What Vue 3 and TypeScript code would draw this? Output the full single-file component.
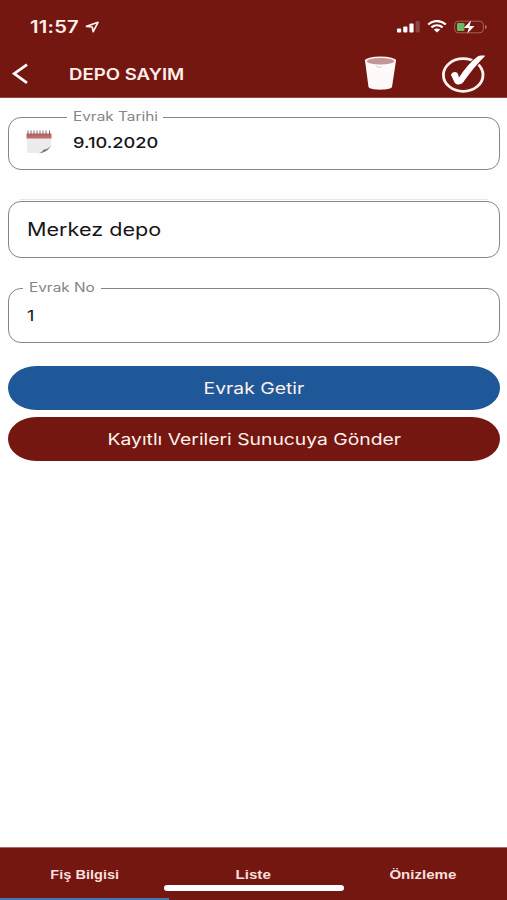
<script setup lang="ts">
import { ref } from 'vue'

interface Tab {
  id: string
  label: string
}

const tabs: Tab[] = [
  { id: 'info', label: 'Fiş Bilgisi' },
  { id: 'list', label: 'Liste' },
  { id: 'preview', label: 'Önizleme' },
]
const activeTab = ref('info')
const documentDate = ref('9.10.2020')
const warehouse = ref('Merkez depo')
const documentNo = ref('1')
</script>

<template>
  <div class="screen">
    <header class="header">
      <div class="status">
        <span class="wide time">11:57</span>
        <svg class="location" width="15" height="12" viewBox="0 0 15 12">
          <path d="M1.5 5.4 13 1.3 8.2 10.7 7.2 6Z" fill="none" stroke="currentColor" stroke-width="1.7" stroke-linejoin="round" />
        </svg>
        <svg class="signal" width="24" height="12" viewBox="0 0 24 12">
          <rect x="0" y="7.5" width="4.2" height="4" rx="1" fill="#fff" />
          <rect x="6.2" y="5.5" width="4.2" height="6" rx="1" fill="#fff" />
          <rect x="12.4" y="2.5" width="4.2" height="9" rx="1" fill="#fff" />
          <rect x="18.6" y="0" width="4.2" height="11.5" rx="1" fill="#fff" opacity=".2" />
        </svg>
        <svg class="wifi" width="20" height="13" viewBox="0 0 20 13">
          <path d="M1.2 4.5C6.2-.1 13.8-.1 18.8 4.5M4.4 7.4c3.3-2.8 7.9-2.8 11.2 0" fill="none" stroke="#fff" stroke-width="2.3" />
          <path d="M6.8 9.6c1.9-1.5 4.5-1.5 6.4 0L10 12.6Z" fill="#fff" />
        </svg>
        <svg class="battery" width="34" height="14" viewBox="0 0 34 14">
          <rect x=".7" y="1.2" width="28.6" height="11.6" rx="3.5" fill="none" stroke="#a8625c" stroke-width="1" />
          <path d="M31 5v4c2.4-.6 2.4-3.4 0-4Z" fill="#b0706b" />
          <rect x="3" y="3" width="7.5" height="8" rx="1.3" fill="#69bd62" />
          <path d="M17.2.3 9.8 8h5l-1.8 5.8L20.5 6h-5Z" fill="#fff" stroke="#741711" stroke-width=".8" paint-order="stroke" />
        </svg>
      </div>
      <div class="nav">
        <svg class="back" width="18" height="22" viewBox="0 0 18 22">
          <path d="M15 1.6 2.2 10.7 15 19.8" fill="none" stroke="#fff" stroke-width="2.7" />
        </svg>
        <h1 class="wide title">DEPO SAYIM</h1>
        <svg class="bin" width="34" height="36" viewBox="0 0 34 36">
          <path d="M1 4.5 4.5 31c1 3.500 22.500 3.500 23.500 0L32 4.500Z" fill="#fffafa" />
          <ellipse cx="16.5" cy="4.7" rx="15.6" ry="4.1" fill="#fff0ee" />
          <ellipse cx="16.5" cy="5.2" rx="13.6" ry="3.2" fill="#c29597" />
          <path d="m12 10 3 1.5 3-1" fill="none" stroke="#dccdcc" stroke-width="1" />
        </svg>
        <svg class="check" width="46" height="40" viewBox="0 0 46 40">
          <ellipse cx="22.2" cy="21" rx="19.8" ry="16.3" fill="none" stroke="#fff4f1" stroke-width="2.8" />
          <path d="M10 21c.8-3.500 6-4 7-.8l1 3.200C24 14.500 30 7.500 36 3c2-1.500 5.500-1.700 8.300-1.200C36.500 9.600 29 18.500 22 28.600c-1.700 2.400-6.700 2.800-8.300.2Z" fill="#fff" stroke="#741711" stroke-width="1.800" paint-order="stroke" />
        </svg>
      </div>
    </header>

    <main class="content">
      <fieldset class="field date-field">
        <legend><span class="wide">Evrak Tarihi</span></legend>
        <svg class="calendar" width="26" height="25" viewBox="0 0 26 25">
          <path d="M1 5h24v18H1Z" fill="#ececec" />
          <path d="M.5 3.5h25v5H.5Z" fill="#c66a69" />
          <path d="M2 .5v5M5 .5v5M8 .5v5M11 .5v5M14 .5v5M17 .5v5M20 .5v5M23.5 .5v5" stroke="#665c60" stroke-width=".9" />
          <path d="M13 23.5c5-.5 8-3 12-8v8Z" fill="#fff" />
          <path d="M13 23.3c3.5-1 4-3.5 5.5-4 2 .5 4.5-1.3 6.5-4-1.5 4-5.5 7.5-12 8Z" fill="#777" />
        </svg>
        <span class="wide value date">{{ documentDate }}</span>
      </fieldset>
      <hr class="rule" />
      <div class="field select-field">
        <span class="wide value warehouse">{{ warehouse }}</span>
      </div>
      <fieldset class="field number-field">
        <legend><span class="wide">Evrak No</span></legend>
        <span class="wide value">{{ documentNo }}</span>
      </fieldset>
      <button class="action fetch"><span class="wide">Evrak Getir</span></button>
      <button class="action send"><span class="wide">Kayıtlı Verileri Sunucuya Gönder</span></button>
    </main>

    <nav class="tabs">
      <button
        v-for="tab in tabs"
        :key="tab.id"
        class="tab"
        :class="{ active: tab.id === activeTab }"
        @click="activeTab = tab.id"
      >
        <span class="wide">{{ tab.label }}</span>
      </button>
      <div class="home-bar"></div>
    </nav>
  </div>
</template>

<style>
body {
  background: #fff;
}
</style>

<style scoped>
* {
  box-sizing: border-box;
}
.screen {
  display: flex;
  flex-direction: column;
  height: 900px;
  font-family: Inter, "Liberation Sans", sans-serif;
  color: #151515;
  background: #fefefe;
}
.wide {
  display: inline-block;
  white-space: nowrap;
  transform: scaleX(1.2);
  transform-origin: left center;
}
.header {
  height: 98px;
  flex: none;
  color: #ffefec;
  background: #741711;
  border-bottom: 1px solid #8f4a45;
}
.status {
  display: flex;
  align-items: center;
  height: 52px;
  padding: 1px 19px 0 30px;
}
.time {
  width: 55px;
  font-size: 16.8px;
  font-weight: 600;
  letter-spacing: 0.2px;
}
.location {
  margin-right: auto;
}
.wifi {
  margin: 0 7px 0 6px;
}
.nav {
  display: flex;
  align-items: center;
  height: 44px;
  padding: 0 20px 0 12px;
}
.title {
  margin: 0 auto 0 39px;
  font-size: 15.5px;
  font-weight: 600;
}
.bin {
  margin-right: 43px;
}
.content {
  display: flex;
  flex-direction: column;
  flex: 1;
  padding: 11px 7px 0 8px;
}
.field {
  display: flex;
  align-items: center;
  min-width: 0;
  margin: 0;
  padding: 0;
  border: 1px solid #858585;
  border-radius: 13px;
}
legend {
  height: 16px;
  padding: 0 6px;
  font-size: 12.8px;
  line-height: 16px;
  color: #858585;
}
.value {
  font-size: 15px;
}
.date-field {
  align-items: flex-start;
  height: 61px;
}
.date-field legend {
  width: 96px;
  margin-left: 58px;
}
.calendar {
  margin: 5px 21px 0 17px;
}
.date {
  margin-top: 9px;
  font-size: 15.2px;
  line-height: 18px;
  font-weight: 500;
}
.rule {
  width: 468px;
  height: 1px;
  margin: 29px auto 1px;
  border: 0;
  background: #e6e6e6;
}
.select-field {
  height: 57px;
  padding-left: 18px;
}
.warehouse {
  font-size: 18px;
}
.number-field {
  height: 63px;
  margin-top: 22px;
  padding: 10px 0 0 18px;
}
.number-field legend {
  width: 78px;
  margin-left: -4px;
}
.action {
  height: 44px;
  padding: 0;
  border: 0;
  border-radius: 28px / 22px;
  font-family: inherit;
  font-size: 16.1px;
  color: #fff1ee;
}
.action .wide,
.tab .wide {
  transform-origin: center;
}
.fetch {
  margin-top: 23px;
  background: #1f5898;
}
.send {
  margin-top: 7px;
  background: #741711;
}
.tabs {
  position: relative;
  display: grid;
  grid-template-columns: repeat(3, 1fr);
  height: 53px;
  background: #741711;
  border-top: 1px solid #a36c69;
}
.tab {
  padding: 2px 0 0;
  border: 0;
  border-bottom: 2px solid transparent;
  font: bold 13px "Liberation Sans", sans-serif;
  color: #f8dfdc;
  background: none;
}
.tab .wide {
  transform: scaleX(1.16);
}
.tab:first-child .wide {
  transform: scaleX(1.12);
}
.tab.active {
  border-bottom-color: #4877b8;
}
.home-bar {
  position: absolute;
  left: 164px;
  bottom: 9px;
  width: 180px;
  height: 6px;
  border-radius: 3px;
  background: #fff;
}
</style>
